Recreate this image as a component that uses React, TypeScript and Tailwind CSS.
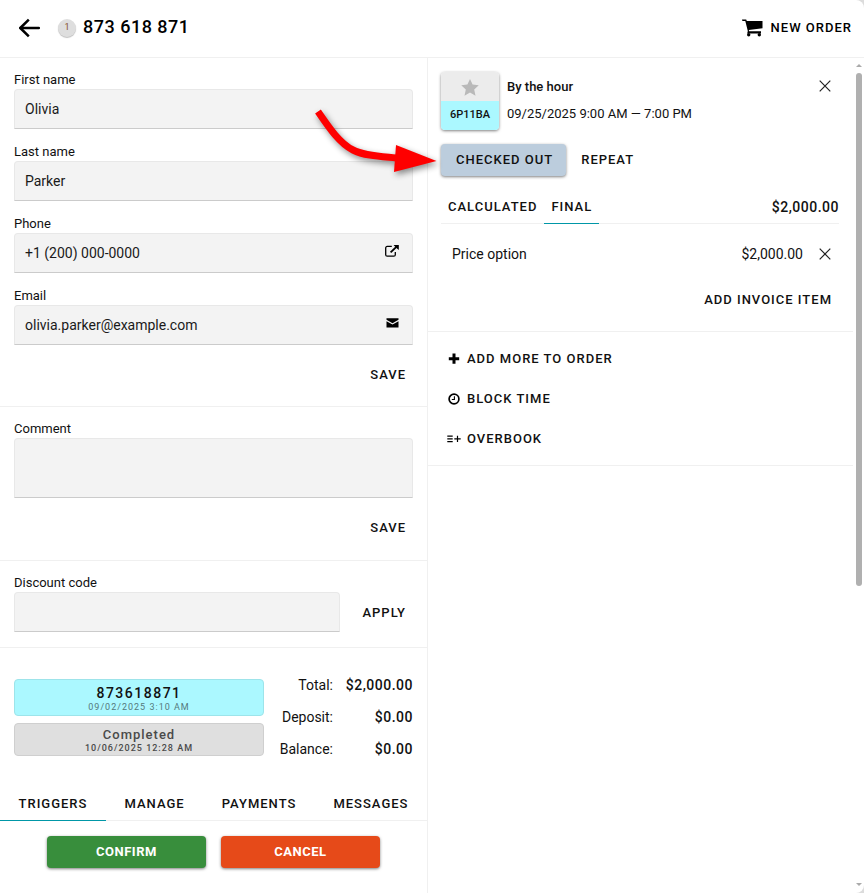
import React, { useState } from 'react';
import clsx from 'clsx';

const textButton =
  'h-8 pr-[7px] pl-2 text-[13px] font-medium tracking-[1px] uppercase whitespace-nowrap rounded hover:bg-gray-100';

const fieldBox =
  'block w-full rounded-t border border-[#e8e8e8] border-b-[#cbcbcb] bg-[#f3f3f3] px-2.5 text-sm text-[#1a1a1a]';

const fieldLabel = 'block h-5 pt-px text-[13px] leading-5';

function CloseIcon() {
  return (
    <svg width="12" height="12" viewBox="0 0 12 12" fill="none" stroke="#222" strokeWidth="1.2">
      <path d="M0.7 0.7 11.3 11.3M11.3 0.7 0.7 11.3" />
    </svg>
  );
}

function ArrowBackIcon() {
  return (
    <svg width="22" height="20" viewBox="0 0 22 20" fill="none" stroke="#000" strokeWidth="2.5">
      <path d="M20.8 10H2.5" strokeLinecap="round" />
      <path d="M10.8 1.6 2.3 10l8.5 8.4" strokeLinejoin="round" />
    </svg>
  );
}

function CartIcon() {
  return (
    <svg width="21" height="18" viewBox="0 0 21 18" fill="#000">
      <path d="M0 .5h4.200l.6 1.500H20.500v7.300L6.800 11l.4 1.300H19v2.200H5.200l.6-2.600L3.300 2.100H.4z" />
      <circle cx="6.700" cy="15.800" r="1.700" />
      <circle cx="17.300" cy="15.800" r="1.700" />
    </svg>
  );
}

function ExternalIcon() {
  return (
    <svg width="14" height="12" viewBox="0 0 14 12" fill="none" stroke="#000">
      <path d="M6.8 1.4H2.2A1.5 1.5 0 0 0 .7 2.9v6.8a1.5 1.5 0 0 0 1.5 1.5h6.6a1.5 1.5 0 0 0 1.5-1.5V7" strokeWidth="1.3" />
      <path d="M5.6 7.4 11.4 1.9" strokeWidth="1.9" />
      <path d="M8.6 0h5.2v5L12 3.6 10.2 1.8z" fill="#000" stroke="none" />
    </svg>
  );
}

function MailIcon() {
  return (
    <svg width="13" height="10" viewBox="0 0 13 10" fill="#000">
      <path d="M.5.3h12v1.5L6.5 5.3.5 1.8z" />
      <path d="M.5 3.2l6 3.4 6-3.4v6.4H.5z" />
    </svg>
  );
}

function StarIcon() {
  return (
    <svg width="18" height="17" viewBox="0 0 18 17" fill="#b9b9b9">
      <path d="M9 0l2.600 5.600 6.200.7-4.600 4.200 1.300 6.200L9 13.600l-5.500 3.100 1.300-6.200L.2 6.300l6.200-.7z" />
    </svg>
  );
}

function PlusIcon() {
  return (
    <svg width="12" height="12" viewBox="0 0 12 12" fill="none" stroke="#000" strokeWidth="3">
      <path d="M6 .6v10.2M.8 5.7h10.4" />
    </svg>
  );
}

function ClockIcon() {
  return (
    <svg width="12" height="12" viewBox="0 0 12 12" fill="none" stroke="#000">
      <circle cx="6" cy="6" r="4.9" strokeWidth="1.7" />
      <path d="M6.4 3.3v3.2H3.8" strokeWidth="1.1" />
    </svg>
  );
}

function ListPlusIcon() {
  return (
    <svg width="14" height="8" viewBox="0 0 14 8" fill="none" stroke="#000" strokeWidth="1.2">
      <path d="M.3 1.2h5.4M.3 3.9h5.4M.3 6.6h5.4M7.3 3.9h6.4M10.500.8v6.300" />
    </svg>
  );
}

// Red hint pointing at the order status button
function HintArrow() {
  return (
    <svg
      className="pointer-events-none absolute right-full -top-11 z-10 drop-shadow-[2px_3px_3px_rgba(0,0,0,0.45)]"
      width="135"
      height="84"
      viewBox="0 0 135 84"
      aria-hidden="true"
    >
      <path d="M12 11.5C22 26 33 43 47 50c12 6 28 6.5 43 8" fill="none" stroke="#fe0000" strokeWidth="7" />
      <path d="M90 45l40.5 16L88 72z" fill="#fe0000" />
    </svg>
  );
}

interface FieldProps {
  id: string;
  label: string;
  defaultValue?: string;
  type?: string;
  icon?: React.ReactNode;
}

function Field({ id, label, defaultValue = '', type = 'text', icon }: FieldProps) {
  return (
    <div>
      <label htmlFor={id} className={fieldLabel}>{label}</label>
      <div className="relative">
        <input id={id} type={type} defaultValue={defaultValue} className={clsx(fieldBox, 'h-10')} />
        {icon && (
          <span className="absolute inset-y-0 right-[13px] flex w-4 items-center justify-center pb-1">{icon}</span>
        )}
      </div>
    </div>
  );
}

const tabs = ['Triggers', 'Manage', 'Payments', 'Messages'];

const totals = [
  { label: 'Total:', value: '$2,000.00' },
  { label: 'Deposit:', value: '$0.00' },
  { label: 'Balance:', value: '$0.00' },
];

const actions = [
  { label: 'Add more to order', icon: <PlusIcon /> },
  { label: 'Block time', icon: <ClockIcon /> },
  { label: 'Overbook', icon: <ListPlusIcon /> },
];

function CustomerPane() {
  const [tab, setTab] = useState('Triggers');

  return (
    <div className="w-[calc(50%-4px)] border-r border-[#f0f0f0]">
      <section className="border-b border-[#f0f0f0] px-3.5 pt-[11px] pb-[15px]">
        <div className="flex flex-col gap-3">
          <Field id="first-name" label="First name" defaultValue="Olivia" />
          <Field id="last-name" label="Last name" defaultValue="Parker" />
          <Field id="phone" label="Phone" type="tel" defaultValue="+1 (200) 000-0000" icon={<ExternalIcon />} />
          <Field id="email" label="Email" type="email" defaultValue="olivia.parker@example.com" icon={<MailIcon />} />
        </div>
        <div className="mt-3.5 flex justify-end">
          <button className={textButton}>Save</button>
        </div>
      </section>

      <section className="border-b border-[#f0f0f0] px-3.5 pt-[11px] pb-4">
        <label htmlFor="comment" className={fieldLabel}>Comment</label>
        <textarea id="comment" className={clsx(fieldBox, 'h-15 resize-none py-2')} />
        <div className="mt-3.5 flex justify-end">
          <button className={textButton}>Save</button>
        </div>
      </section>

      <section className="flex items-end gap-3.5 border-b border-[#f0f0f0] px-3.5 pt-[11px] pb-[15px]">
        <div className="flex-1">
          <Field id="discount" label="Discount code" />
        </div>
        <button className={clsx(textButton, 'mb-[3px]')}>Apply</button>
      </section>

      <section className="flex items-center gap-3.5 px-3.5 pt-[25px]">
        <div className="flex flex-1 flex-col gap-[7px] text-center">
          <div className="h-[37px] rounded border border-[#9de4ea] bg-[#abf8ff] pt-[5px]">
            <div className="text-sm leading-4 font-medium tracking-[1.5px]">873618871</div>
            <div className="text-[9px] leading-3 tracking-[1px] text-[#55797c]">09/02/2025 3:10 AM</div>
          </div>
          <div className="h-[33px] rounded border border-[#cfcfcf] bg-[#dfdfdf] pt-[3px] text-[#4a4a4a]">
            <div className="text-[13px] leading-4 font-medium tracking-[1px]">Completed</div>
            <div className="text-[9px] leading-[10px] font-medium tracking-[1px]">10/06/2025 12:28 AM</div>
          </div>
        </div>
        <dl className="flex w-[135px] flex-col gap-2 text-sm leading-6">
          {totals.map((t) => (
            <div key={t.label} className="flex justify-end">
              <dt>{t.label}</dt>
              <dd className="w-20 text-right font-medium tracking-[0.5px]">{t.value}</dd>
            </div>
          ))}
        </dl>
      </section>

      <div className="mt-6 flex border-b border-[#f0f0f0]">
        {tabs.map((t) => (
          <button
            key={t}
            onClick={() => setTab(t)}
            className={clsx(
              '-mb-px h-9 flex-auto border-b pt-0.5 text-[13px] font-medium tracking-[1px] uppercase',
              tab === t ? 'border-[#0097a7]' : 'border-transparent'
            )}
          >
            {t}
          </button>
        ))}
      </div>

      <div className="flex gap-[15px] px-[47px] pt-[15px] pb-6 text-[13px] font-bold tracking-[0.5px] text-white">
        <button className="h-8 flex-1 rounded bg-[#388e3c] uppercase shadow-[0_1px_3px_rgba(0,0,0,0.5)]">Confirm</button>
        <button className="h-8 flex-1 rounded bg-[#e64a19] uppercase shadow-[0_1px_3px_rgba(0,0,0,0.5)]">Cancel</button>
      </div>
    </div>
  );
}

function OrderPane() {
  const [mode, setMode] = useState('Final');

  return (
    <div className="min-w-0 flex-1">
      <section className="border-b border-[#f0f0f0] pt-3.5 pr-3.5 pb-[15px] pl-[13px]">
        <div className="flex items-start">
          <div className="w-[58px] overflow-hidden rounded shadow-[0_1px_3px_rgba(0,0,0,0.5)]">
            <div className="flex h-[29px] items-center justify-center bg-[#ececec] pt-0.5">
              <StarIcon />
            </div>
            <div className="h-[29px] bg-[#abf8ff] text-center text-[11px] leading-[27px] font-medium">6P11BA</div>
          </div>
          <div className="ml-2 flex-1 pt-[5px]">
            <div className="text-[13px] leading-5 font-medium">By the hour</div>
            <div className="mt-[7px] text-[13px] leading-5">09/25/2025 9:00 AM — 7:00 PM</div>
          </div>
          <button aria-label="Remove booking" className="p-2">
            <CloseIcon />
          </button>
        </div>

        <div className="mt-3.5 flex gap-[7px]">
          <div className="relative">
            <HintArrow />
            <button className="h-8 rounded bg-[#bccddd] pr-[13px] pl-[15px] text-[13px] font-medium tracking-[1px] uppercase shadow-[0_1px_3px_rgba(0,0,0,0.5)]">
              Checked out
            </button>
          </div>
          <button className={textButton}>Repeat</button>
        </div>

        <div className="mt-3.5 flex items-center border-b border-[#f0f0f0]">
          {['Calculated', 'Final'].map((m) => (
            <button
              key={m}
              onClick={() => setMode(m)}
              className={clsx(
                '-mb-px h-[34px] border-b px-[7px] text-[13px] font-medium tracking-[1px] uppercase',
                mode === m ? 'border-[#0097a7]' : 'border-transparent'
              )}
            >
              {m}
            </button>
          ))}
          <span className="ml-auto text-sm font-medium tracking-[0.5px]">$2,000.00</span>
        </div>

        <div className="mt-3.5 flex h-8 items-center pl-[11px] text-sm">
          <span className="flex-1">Price option</span>
          <span className="mr-2">$2,000.00</span>
          <button aria-label="Remove price option" className="p-2">
            <CloseIcon />
          </button>
        </div>
        <div className="mt-3.5 flex justify-end">
          <button className={textButton}>Add invoice item</button>
        </div>
      </section>

      <section className="flex flex-col items-start border-b border-[#f0f0f0] px-[13px] pt-[7px] pb-1.5">
        {actions.map((a) => (
          <button
            key={a.label}
            className="flex h-10 items-center gap-1.5 px-[5px] text-[13px] font-medium tracking-[1px] uppercase"
          >
            <span className="flex w-[15px] justify-center">{a.icon}</span>
            {a.label}
          </button>
        ))}
      </section>
    </div>
  );
}

function ScrollTrack() {
  return (
    <div className="flex w-[11px] flex-col items-center pt-1.5 pb-1.5" aria-hidden="true">
      <svg width="6" height="4" viewBox="0 0 6 4" fill="#aaa"><path d="M3 0 6 3H0z" /></svg>
      <div className="mt-[5px] w-1.5 grow-[513] basis-0 rounded-full bg-[#b0b0b0]" />
      <div className="grow-[297] basis-0" />
      <svg width="6" height="4" viewBox="0 0 6 4" fill="#aaa"><path d="M0 0h6L3 3z" /></svg>
    </div>
  );
}

export default function App() {
  return (
    <div className="min-h-screen bg-[#dcdcdc] font-['Roboto',sans-serif] text-[#111]">
      <div className="flex min-h-screen flex-col rounded-r-lg bg-white">
        <header className="flex h-[58px] items-center border-b border-[#f0f0f0] pr-3 pb-0.5 pl-[18px]">
          <button aria-label="Back">
            <ArrowBackIcon />
          </button>
          <span className="ml-[18px] flex size-[18px] items-center justify-center rounded-full bg-[#dedede] text-[9px] text-[#85502a] shadow-[0_1px_1px_rgba(0,0,0,0.25)]">
            1
          </span>
          <h1 className="ml-[7px] pb-0.5 text-lg font-medium tracking-[0.5px] text-black">873 618 871</h1>
          <button className="ml-auto flex items-center gap-2 text-[13px] font-medium tracking-[1px] text-black uppercase">
            <CartIcon />
            New order
          </button>
        </header>
        <main className="flex flex-1">
          <CustomerPane />
          <OrderPane />
          <ScrollTrack />
        </main>
      </div>
    </div>
  );
}
